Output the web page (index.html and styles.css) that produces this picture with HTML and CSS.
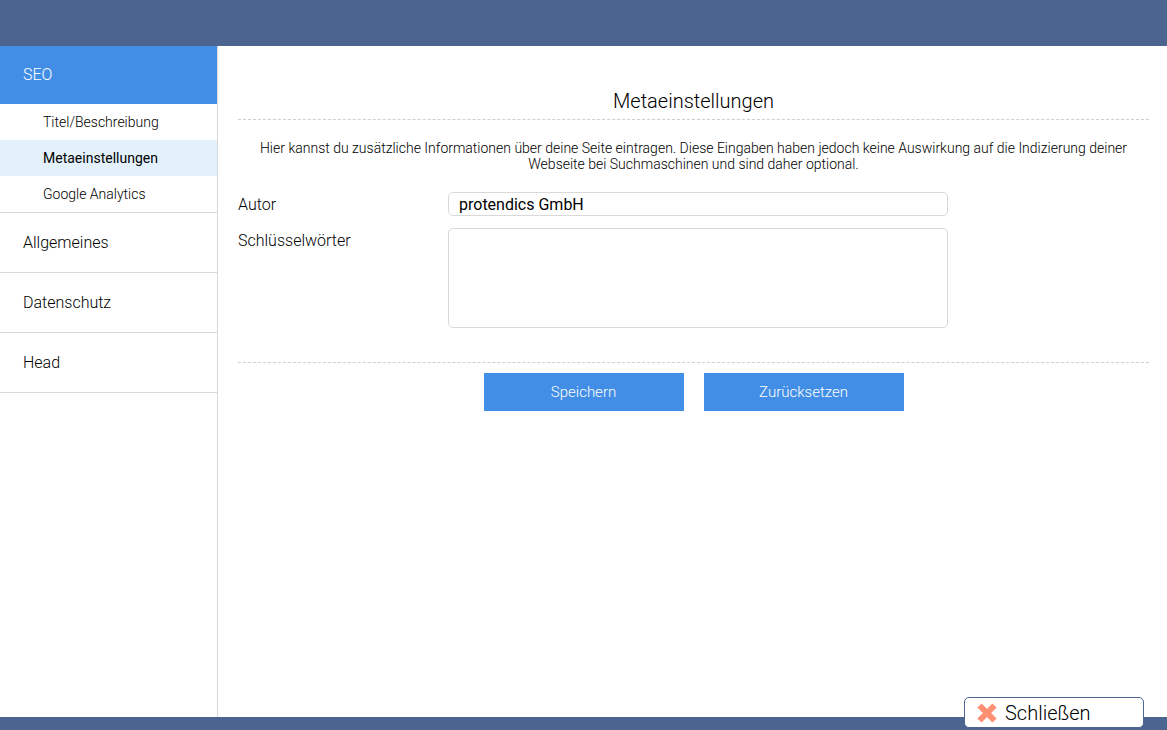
FILE: index.html
```html
<!DOCTYPE html>
<html lang="de">
<head>
    <meta charset="UTF-8">
    <title>Metaeinstellungen</title>
    <link rel="stylesheet" href="styles.css">
</head>
<body>
    <header class="topbar"></header>

    <div class="layout">
        <nav class="sidebar">
            <div class="nav-group">
                <div class="nav-item active">SEO</div>
                <div class="subnav">
                    <div class="sub-item">Titel/Beschreibung</div>
                    <div class="sub-item current">Metaeinstellungen</div>
                    <div class="sub-item">Google Analytics</div>
                </div>
            </div>
            <div class="nav-group"><div class="nav-item">Allgemeines</div></div>
            <div class="nav-group"><div class="nav-item">Datenschutz</div></div>
            <div class="nav-group"><div class="nav-item">Head</div></div>
        </nav>

        <main class="content">
            <h1 class="title">Metaeinstellungen</h1>
            <p class="intro">Hier kannst du zusätzliche Informationen über deine Seite eintragen. Diese Eingaben haben jedoch keine Auswirkung auf die Indizierung deiner Webseite bei Suchmaschinen und sind daher optional.</p>

            <div class="form-row">
                <label class="form-label" for="author">Autor</label>
                <input class="form-input" id="author" type="text" value="protendics GmbH">
            </div>
            <div class="form-row">
                <label class="form-label" for="keywords">Schlüsselwörter</label>
                <textarea class="form-textarea" id="keywords"></textarea>
            </div>

            <div class="actions">
                <button class="btn" type="button">Speichern</button>
                <button class="btn" type="button">Zurücksetzen</button>
            </div>
        </main>
    </div>

    <footer class="bottombar"></footer>

    <button class="close-btn" type="button">
        <svg class="close-icon" viewBox="0 0 20 20" width="20" height="20">
            <path d="M2.5 2.5 L17.5 17.5 M17.5 2.5 L2.5 17.5" stroke="#ff8f73" stroke-width="6" fill="none"/>
        </svg>
        Schließen
    </button>
</body>
</html>
```

FILE: styles.css
```css
html, body {
    height: 100%;
}
body {
    margin: 0;
    display: flex;
    flex-direction: column;
    font-family: Roboto, "Liberation Sans", sans-serif;
    font-weight: 300;
    color: #000;
    background: white;
    overflow: hidden;
}
.topbar {
    height: 46px;
    flex: none;
    background: #4c6490;
}
.bottombar {
    height: 13px;
    flex: none;
    background: #4c6490;
}
.layout {
    flex: 1;
    display: flex;
    min-height: 0;
}
.sidebar {
    width: 217px;
    flex: none;
    border-right: 1px solid #d9d9d9;
}
.nav-group {
    border-bottom: 1px solid #d9d9d9;
}
.nav-item {
    height: 59px;
    line-height: 59px;
    padding-left: 23px;
    font-size: 16px;
}
.nav-item.active {
    height: 58px;
    line-height: 58px;
    background: #428ee6;
    color: white;
}
.sub-item {
    height: 36px;
    line-height: 36px;
    padding-left: 43px;
    font-size: 14px;
}
.sub-item.current {
    background: #e3f1fd;
    font-weight: 400;
}
.content {
    flex: 1;
    padding: 0 18px 0 20px;
}
.title {
    margin: 0;
    padding: 43px 0 6px;
    height: 24px;
    line-height: 24px;
    box-sizing: content-box;
    border-bottom: 1px dashed #cfcfcf;
    font-size: 20px;
    font-weight: 300;
    text-align: center;
}
.intro {
    margin: 0;
    padding: 20px 0 20px;
    font-size: 14px;
    line-height: 16px;
    text-align: center;
}
.form-row {
    display: flex;
    margin-bottom: 12px;
}
.form-label {
    width: 210px;
    height: 24px;
    flex: none;
    font-size: 16px;
    line-height: 26px;
}
.form-input,
.form-textarea {
    width: 500px;
    box-sizing: border-box;
    margin: 0;
    border: 1px solid #d9d9d9;
    border-radius: 5px;
    background: white;
    outline: none;
    font-family: inherit;
    font-size: 16px;
    font-weight: 400;
    color: #000;
}
.form-input {
    height: 24px;
    padding: 1px 10px 0;
}
.form-textarea {
    height: 100px;
    padding: 4px 10px;
    resize: none;
    display: block;
}
.actions {
    margin-top: 34px;
    padding-top: 10px;
    border-top: 1px dashed #cfcfcf;
    display: flex;
    justify-content: center;
    gap: 20px;
}
.btn {
    width: 200px;
    height: 38px;
    padding: 0;
    border: none;
    background: #428ee6;
    color: white;
    font-family: inherit;
    font-size: 15px;
    font-weight: 300;
}
.close-btn {
    position: absolute;
    left: 964px;
    top: 697px;
    width: 180px;
    height: 31px;
    box-sizing: border-box;
    padding: 0 0 0 12px;
    display: flex;
    align-items: center;
    gap: 8px;
    border: 1px solid #4c6490;
    border-radius: 5px;
    background: white;
    color: #000;
    font-family: inherit;
    font-size: 20px;
    font-weight: 300;
}
```
